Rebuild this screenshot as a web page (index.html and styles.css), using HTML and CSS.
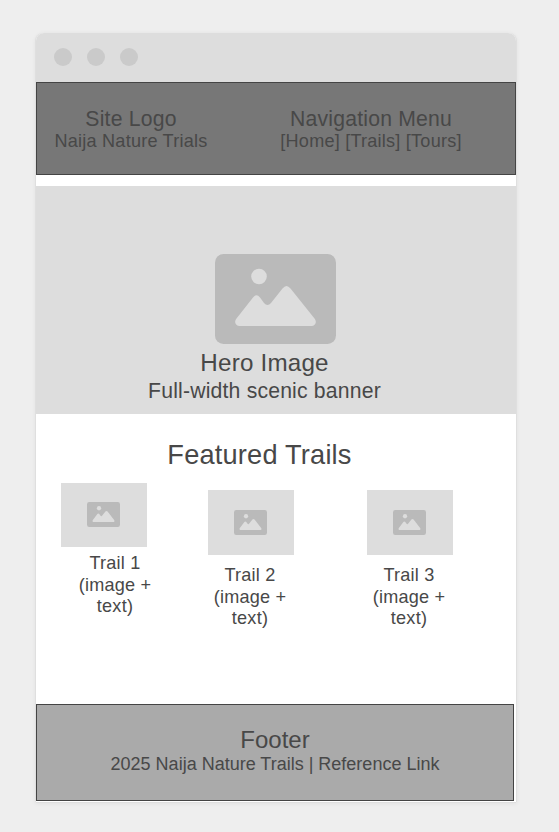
FILE: index.html
```html
<!DOCTYPE html>
<html lang="en">
<head>
<meta charset="utf-8">
<title>Naija Nature Trails</title>
<link rel="stylesheet" href="styles.css">
</head>
<body>
<svg class="defs" width="0" height="0" aria-hidden="true">
  <symbol id="picture" viewBox="0 0 121 90" preserveAspectRatio="none">
    <rect width="121" height="90" rx="8.5" fill="#bababa"/>
    <circle cx="44" cy="22.5" r="7.8" fill="#ddd"/>
    <path d="M21.500 64.500L38 43.500Q41.500 39 45 43.500L49 49Q52.500 53 56 49L67.500 34.500Q71.500 29.500 75.500 34.500L99.500 64.500C102.500 68.500 100 72 96.500 72H24.500C21 72 18.500 68.500 21.500 64.500Z" fill="#ddd"/>
  </symbol>
</svg>
<div class="window">
  <div class="titlebar"><i class="dot"></i><i class="dot"></i><i class="dot"></i></div>
  <header class="header">
    <div class="brand">
      <div class="label">Site Logo</div>
      <div class="sub">Naija Nature Trials</div>
    </div>
    <nav class="nav">
      <div class="label">Navigation Menu</div>
      <div class="sub">[Home] [Trails] [Tours]</div>
    </nav>
  </header>
  <section class="hero">
    <svg class="hero-icon"><use href="#picture"/></svg>
    <h1>Hero Image</h1>
    <p>Full-width scenic banner</p>
  </section>
  <main class="featured">
    <h2>Featured Trails</h2>
    <div class="trails">
      <article class="trail trail-first">
        <div class="thumb"><svg><use href="#picture"/></svg></div>
        <p>Trail 1<br>(image +<br>text)</p>
      </article>
      <article class="trail">
        <div class="thumb"><svg><use href="#picture"/></svg></div>
        <p>Trail 2<br>(image +<br>text)</p>
      </article>
      <article class="trail">
        <div class="thumb"><svg><use href="#picture"/></svg></div>
        <p>Trail 3<br>(image +<br>text)</p>
      </article>
    </div>
  </main>
  <footer class="footer">
    <h3>Footer</h3>
    <p>2025 Naija Nature Trails | Reference Link</p>
  </footer>
</div>
</body>
</html>
```
FILE: styles.css
```css
* { box-sizing: border-box; }
body {
  margin: 0;
  padding: 33px 0 0 36px;
  height: 832px;
  overflow: hidden;
  background: #eee;
  color: #484848;
  font-family: "Liberation Sans", Arial, sans-serif;
}
h1, h2, h3, p { margin: 0; font-weight: 400; }
.defs { position: absolute; }
svg { display: block; }
.window {
  width: 480px;
  height: 769px;
  display: flex;
  flex-direction: column;
  background: #fff;
  border-radius: 8px 8px 0 0;
  box-shadow: -1px 0 0 #dfdfdf, 1px 0 0 #dfdfdf, 0 1px 0 #dfdfdf, 0 1px 4px 1px rgba(0, 0, 0, .05);
}
.titlebar {
  height: 49px;
  display: flex;
  gap: 15px;
  padding: 15px 18px;
  background: #ddd;
  border-radius: 8px 8px 0 0;
}
.dot { width: 18px; height: 18px; border-radius: 50%; background: #cacaca; }
.header {
  height: 93px;
  display: flex;
  padding-top: 24px;
  background: #777;
  border: 1px solid #444;
  text-align: center;
  white-space: nowrap;
}
.brand { flex: none; width: 188px; }
.nav { flex: none; width: 292px; }
.label { font-size: 21.2px; line-height: 24px; letter-spacing: .2px; }
.sub { font-size: 18.1px; line-height: 21px; letter-spacing: .22px; }
.hero {
  height: 228px;
  margin-top: 11px;
  padding-top: 68px;
  background: #ddd;
  text-align: center;
}
.hero-icon { width: 121px; height: 90px; margin: 0 auto 5px 179px; }
.hero h1 { padding-right: 23px; font-size: 24.2px; line-height: 28px; letter-spacing: .2px; }
.hero p { padding-right: 23px; font-size: 21.2px; line-height: 28px; letter-spacing: .18px; }
.featured { height: 290px; padding-top: 25px; }
.featured h2 { padding-right: 33px; font-size: 27.2px; line-height: 32px; letter-spacing: .2px; text-align: center; }
.trails { display: flex; gap: 73px; padding: 19px 0 0 172px; }
.trail { width: 86px; }
.trail-first { margin: -7px -12px 0 -147px; }
.thumb { height: 65px; padding: 20px 26px; background: #ddd; }
.trail-first .thumb { height: 64px; padding-top: 19px; }
.thumb svg { width: 33px; height: 25px; }
.trail p { width: 84px; margin-top: 10px; font-size: 18.1px; line-height: 21.5px; letter-spacing: .22px; text-align: center; }
.trail-first p { margin: 6px 0 0 12px; }
.footer {
  width: 478px;
  height: 97px;
  padding-top: 21px;
  background: #aaa;
  border: 1px solid #444;
  text-align: center;
}
.footer h3 { font-size: 24px; line-height: 28px; }
.footer p { font-size: 18px; line-height: 21px; }
```
